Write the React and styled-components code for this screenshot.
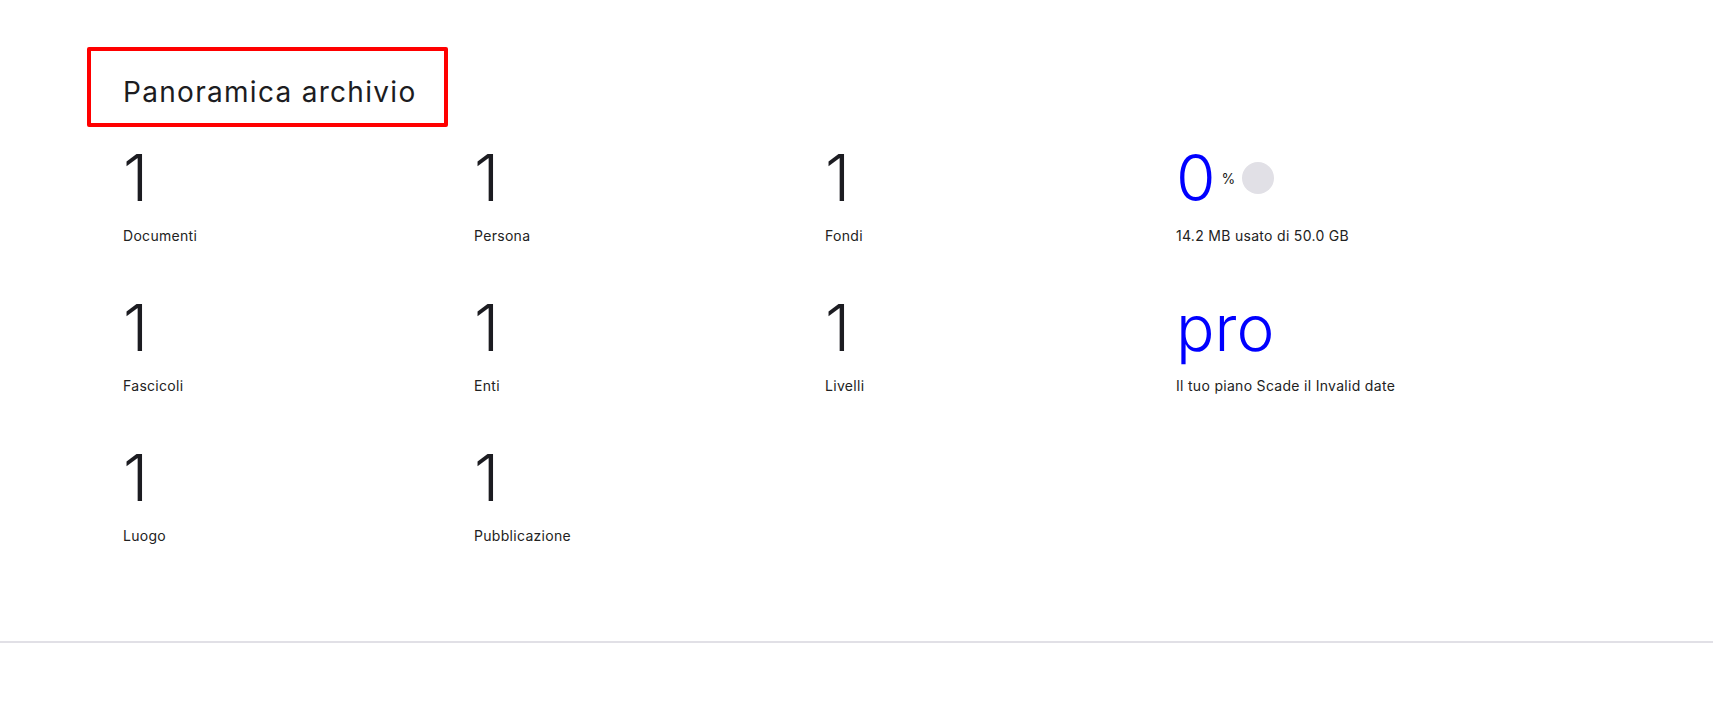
import React from 'react';
import styled, { createGlobalStyle } from 'styled-components';

const GlobalStyle = createGlobalStyle`
  body {
    margin: 0;
    background: #fff;
    font-family: Inter, "Noto Sans", sans-serif;
    color: #1c1c21;
  }
`;

const Overview = styled.section`
  height: 643px;
  padding: 47px 0 0 87px;
  box-sizing: border-box;
  border-bottom: 2px solid #e1e0e6;
`;

const Heading = styled.h2`
  display: inline-block;
  box-sizing: border-box;
  width: 361px;
  height: 80px;
  margin: 0;
  padding: 22px 0 0 32px;
  border: 4px solid #ff0000;
  border-radius: 2px;
  font-size: 28px;
  font-weight: 400;
  line-height: 38px;
  letter-spacing: 1.3px;
`;

const StatGrid = styled.div`
  display: grid;
  grid-template-columns: repeat(4, 351px);
  row-gap: 50px;
  margin: 19px 0 0 36px;
`;

const Stat = styled.div`
  display: flex;
  flex-direction: column;
`;

const ValueRow = styled.div`
  display: flex;
  align-items: center;
  height: 64px;
`;

const Value = styled.span`
  font-size: 64px;
  font-weight: 300;
  line-height: 64px;
  color: ${(p) => (p.$accent ? '#0000ff' : '#1c1c21')};
`;

const Unit = styled.span`
  margin-left: 6px;
  font-size: 14px;
  color: #1c1c21;
`;

const UsageDot = styled.span`
  width: 32px;
  height: 32px;
  margin-left: 7px;
  border-radius: 50%;
  background: #e1e0e6;
`;

const Label = styled.div`
  margin-top: 16px;
  font-size: 14px;
  line-height: 20px;
  letter-spacing: 0.3px;
  color: #222;
`;

const stats = [
  { value: '1', label: 'Documenti' },
  { value: '1', label: 'Persona' },
  { value: '1', label: 'Fondi' },
  { kind: 'usage' },
  { value: '1', label: 'Fascicoli' },
  { value: '1', label: 'Enti' },
  { value: '1', label: 'Livelli' },
  { kind: 'plan' },
  { value: '1', label: 'Luogo' },
  { value: '1', label: 'Pubblicazione' },
];

const App = () => (
  <>
    <GlobalStyle />
    <Overview>
      <Heading>Panoramica archivio</Heading>
      <StatGrid>
        {stats.map((s, i) => {
          if (s.kind === 'usage') {
            return (
              <Stat key={i}>
                <ValueRow>
                  <Value $accent>0</Value>
                  <Unit>%</Unit>
                  <UsageDot />
                </ValueRow>
                <Label>14.2 MB usato di 50.0 GB</Label>
              </Stat>
            );
          }
          if (s.kind === 'plan') {
            return (
              <Stat key={i}>
                <ValueRow>
                  <Value $accent>pro</Value>
                </ValueRow>
                <Label>Il tuo piano Scade il Invalid date</Label>
              </Stat>
            );
          }
          return (
            <Stat key={i}>
              <ValueRow>
                <Value>{s.value}</Value>
              </ValueRow>
              <Label>{s.label}</Label>
            </Stat>
          );
        })}
      </StatGrid>
    </Overview>
  </>
);

export default App;
